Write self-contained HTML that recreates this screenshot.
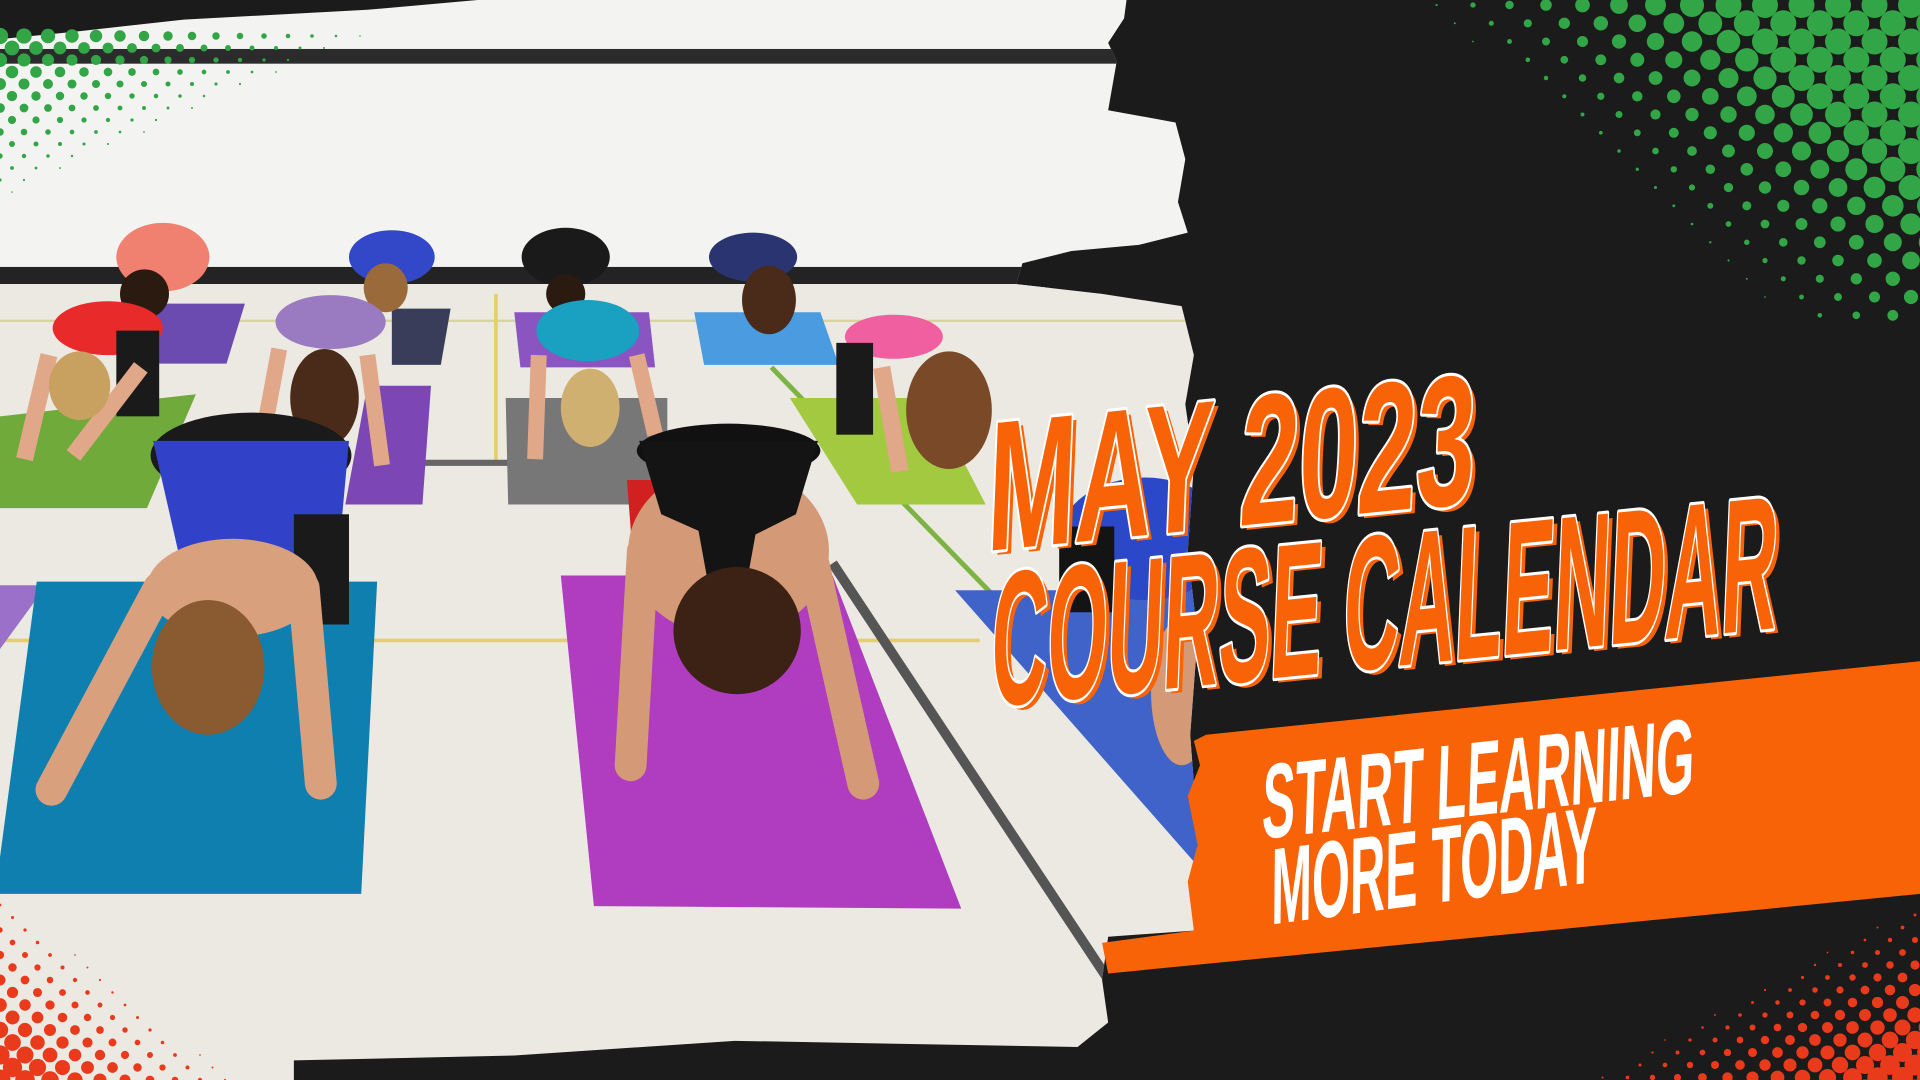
<!DOCTYPE html>
<html><head><meta charset="utf-8"><style>
html,body{margin:0;padding:0;background:#1b1b1b;width:1920px;height:1080px;overflow:hidden}
svg{position:absolute;left:0;top:0}
</style></head><body>
<svg id="photo" width="1920" height="1080" viewBox="0 0 1568 882">
<defs>
<clipPath id="pc"><polygon points="0,0 920,0 918,15 905,35 912,50 905,90 960,100 968,130 962,165 970,190 930,200 875,205 835,215 830,232 900,240 965,250 975,290 968,330 975,380 970,450 978,520 972,600 978,680 975,760 905,765 900,800 905,835 880,855 600,850 420,862 240,866 240,882 0,882"/></clipPath>
</defs>
<g clip-path="url(#pc)">
<rect x="0" y="0" width="1000" height="235" fill="#f3f3f1"/>
<rect x="0" y="40" width="1000" height="12" fill="#2b2b2b"/>
<rect x="0" y="218" width="1000" height="14" fill="#232323"/>
<rect x="0" y="232" width="1000" height="660" fill="#ebe9e2"/>
<line x1="0" y1="523" x2="800" y2="523" stroke="#e3d06a" stroke-width="3"/>
<line x1="0" y1="262" x2="980" y2="262" stroke="#d8d4a0" stroke-width="2"/>
<line x1="405" y1="240" x2="405" y2="380" stroke="#e3d06a" stroke-width="3"/>
<line x1="630" y1="300" x2="810" y2="485" stroke="#7cb342" stroke-width="4"/>
<line x1="680" y1="460" x2="905" y2="800" stroke="#555" stroke-width="8"/>
<line x1="345" y1="378" x2="415" y2="378" stroke="#666" stroke-width="5"/>
<polygon points="125,248 200,248 185,297 130,297" fill="#6b4bb0"/>
<polygon points="320,252 368,252 360,298 320,298" fill="#3a3d5a"/>
<polygon points="420,255 530,255 535,300 425,300" fill="#8a55c0"/>
<polygon points="567,255 670,255 685,298 575,298" fill="#4a9be0"/>
<polygon points="0,340 160,322 120,415 0,415" fill="#6faa3a"/>
<polygon points="300,315 352,315 345,412 282,412" fill="#7c46b5"/>
<polygon points="413,325 545,325 545,412 415,412" fill="#777"/>
<polygon points="645,325 760,325 805,412 700,412" fill="#a2c940"/>
<polygon points="0,478 38,478 0,530" fill="#9a70c8"/>
<polygon points="30,475 308,475 295,730 0,730 0,700" fill="#0f7fb0"/>
<polygon points="458,470 680,470 785,742 485,740" fill="#b03cc0"/>
<polygon points="780,482 985,482 985,715" fill="#3f63c8"/>
<ellipse cx="133" cy="210" rx="38" ry="28" fill="#f08070"/><ellipse cx="118" cy="240" rx="20" ry="20" fill="#2a1a10"/>
<ellipse cx="320" cy="210" rx="35" ry="22" fill="#3248c8"/><ellipse cx="315" cy="235" rx="18" ry="20" fill="#9a6a3a"/>
<ellipse cx="462" cy="210" rx="36" ry="24" fill="#1a1a1a"/><ellipse cx="462" cy="240" rx="16" ry="16" fill="#2a1a10"/>
<ellipse cx="615" cy="210" rx="36" ry="20" fill="#2a3470"/><ellipse cx="628" cy="245" rx="22" ry="28" fill="#4a2a18"/>
<ellipse cx="88" cy="268" rx="45" ry="22" fill="#e82a2a"/><rect x="95" y="270" width="35" height="70" fill="#1a1a1a"/>
<line x1="40" y1="290" x2="20" y2="375" stroke="#e0a888" stroke-width="14"/><line x1="115" y1="300" x2="60" y2="372" stroke="#e0a888" stroke-width="14"/>
<ellipse cx="65" cy="315" rx="25" ry="28" fill="#c8a060"/>
<ellipse cx="270" cy="263" rx="45" ry="22" fill="#9a7ac0"/><ellipse cx="265" cy="325" rx="28" ry="40" fill="#4a2a18"/>
<line x1="228" y1="285" x2="215" y2="355" stroke="#e0a888" stroke-width="13"/><line x1="300" y1="290" x2="312" y2="380" stroke="#e0a888" stroke-width="13"/>
<ellipse cx="480" cy="270" rx="42" ry="25" fill="#1aa0c0"/><line x1="440" y1="290" x2="437" y2="375" stroke="#e0a888" stroke-width="13"/><line x1="520" y1="290" x2="535" y2="355" stroke="#e0a888" stroke-width="13"/>
<ellipse cx="482" cy="333" rx="24" ry="32" fill="#d0b070"/>
<ellipse cx="730" cy="275" rx="40" ry="18" fill="#f060a0"/><ellipse cx="775" cy="335" rx="35" ry="48" fill="#7a4a28"/>
<rect x="683" y="280" width="30" height="75" fill="#1a1a1a"/><line x1="720" y1="300" x2="735" y2="385" stroke="#e0a888" stroke-width="14"/>
<ellipse cx="205" cy="372" rx="82" ry="35" fill="#1a1a1a"/>
<polygon points="125,360 285,360 275,470 150,470" fill="#3242c8"/>
<rect x="240" y="420" width="45" height="90" fill="#1a1a1a"/>
<ellipse cx="190" cy="480" rx="70" ry="40" fill="#d9a07e"/>
<line x1="130" y1="480" x2="42" y2="645" stroke="#d9a07e" stroke-width="26" stroke-linecap="round"/>
<line x1="248" y1="480" x2="262" y2="640" stroke="#d9a07e" stroke-width="26" stroke-linecap="round"/>
<ellipse cx="170" cy="545" rx="46" ry="55" fill="#8a5a30"/>
<ellipse cx="595" cy="368" rx="75" ry="22" fill="#111"/>
<polygon points="512,392 540,392 545,480 518,470" fill="#d02020"/>
<ellipse cx="595" cy="450" rx="82" ry="70" fill="#d49a78"/>
<polygon points="522,360 668,360 650,420 610,440 585,440 540,420" fill="#141414"/>
<polygon points="568,420 620,420 610,475 578,475" fill="#141414"/>
<line x1="525" y1="450" x2="515" y2="625" stroke="#d49a78" stroke-width="26" stroke-linecap="round"/>
<line x1="662" y1="450" x2="705" y2="640" stroke="#d49a78" stroke-width="26" stroke-linecap="round"/>
<ellipse cx="602" cy="515" rx="52" ry="52" fill="#3b2214"/>
<ellipse cx="935" cy="440" rx="70" ry="50" fill="#2a48c8"/><rect x="865" y="430" width="45" height="70" fill="#141414"/>
<ellipse cx="965" cy="565" rx="25" ry="60" fill="#d49a78"/>
</g>
<polygon points="0,0 390,0 300,8 150,16 60,26 0,32" fill="#1b1b1b"/>
</svg>

<svg id="dots" width="1920" height="1080" viewBox="0 0 1920 1080"></svg>

<svg id="top" width="1920" height="1080" viewBox="0 0 1568 882">
<polygon points="985,600 1568,540 1568,730 905,795 900,770 975,760 970,720 978,690 970,650 980,625 975,605" fill="#f96307"/>
<g font-family="Liberation Sans, sans-serif" font-weight="bold">
<g transform="translate(805,450) rotate(-5.7) skewX(-8)">
<text x="4" y="4" font-size="150" textLength="400" lengthAdjust="spacingAndGlyphs" fill="#f96307">MAY 2023</text>
<text x="0" y="0" font-size="150" textLength="400" lengthAdjust="spacingAndGlyphs" fill="#f96307" stroke="#fff" stroke-width="5" paint-order="stroke" stroke-linejoin="round">MAY 2023</text>
</g>
<g transform="translate(808,577) rotate(-5.7) skewX(-8)">
<text x="4" y="4" font-size="155" textLength="645" lengthAdjust="spacingAndGlyphs" fill="#f96307">COURSE CALENDAR</text>
<text x="0" y="0" font-size="155" textLength="645" lengthAdjust="spacingAndGlyphs" fill="#f96307" stroke="#fff" stroke-width="5" paint-order="stroke" stroke-linejoin="round">COURSE CALENDAR</text>
</g>
<g transform="translate(1030,685) rotate(-6.2) skewX(-8)">
<text x="0" y="0" font-size="86" textLength="355" lengthAdjust="spacingAndGlyphs" fill="#fff">START LEARNING</text>
</g>
<g transform="translate(1038,755) rotate(-7.5) skewX(-8)">
<text x="0" y="0" font-size="88" textLength="268" lengthAdjust="spacingAndGlyphs" fill="#fff">MORE TODAY</text>
</g>
</g>
</svg>

<script>
(function(){
var s=document.getElementById('dots'),out=[];
function ht(color,ax,ay,bx,by,sx,sy,scale,maxR,x0,x1,y0,y1,step){
 var dx=bx-ax,dy=by-ay,L=Math.hypot(dx,dy),nx=-dy/L,ny=dx/L;
 if((sx-ax)*nx+(sy-ay)*ny<0){nx=-nx;ny=-ny;}
 var row=0;
 for(var y=y0;y<=y1;y+=step/2,row++){
  for(var x=x0+(row%2?step/2:0);x<=x1;x+=step){
   var d=(x-ax)*nx+(y-ay)*ny; if(d<=0)continue;
   var r=Math.min(maxR,d*scale); if(r<0.8)continue;
   out.push('<circle cx="'+x.toFixed(1)+'" cy="'+y.toFixed(1)+'" r="'+r.toFixed(2)+'" fill="'+color+'"/>');
  }}
}
ht('#32a546',1405,0,1760,310,1920,0,0.065,13,1400,1940,5,320,36.5);
ht('#32a546',480,0,0,215,0,0,0.05,9,0,500,36,240,24);
ht('#ea3a1c',0,880,250,1080,0,1080,0.07,10.5,0,270,880,1090,25);
ht('#ea3a1c',1567,1080,1920,888,1920,1080,0.07,10.5,1540,1940,890,1090,25);
s.innerHTML=out.join('');
})();
</script>
</body></html>
